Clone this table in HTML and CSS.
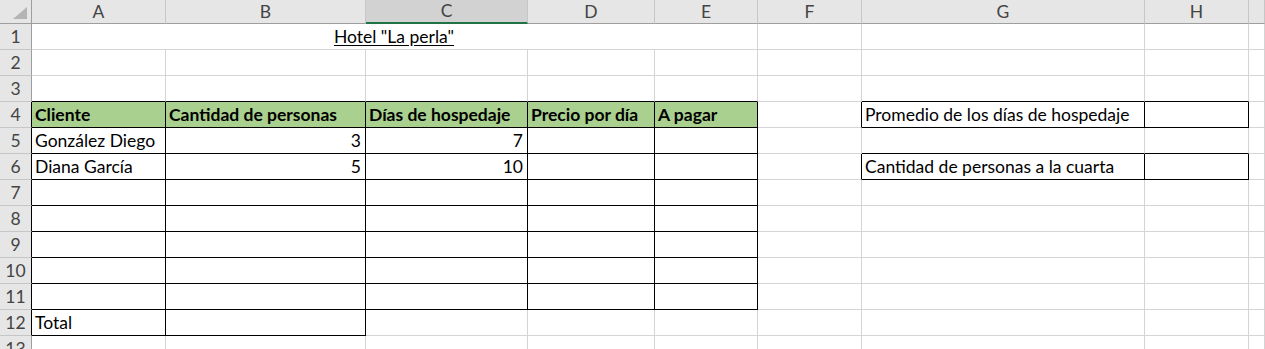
FILE: index.html
```html
<!DOCTYPE html>
<html lang="es">
<head>
<meta charset="utf-8">
<title>Hotel "La perla"</title>
<link rel="stylesheet" href="styles.css">
</head>
<body>
<div class="sheet">
  <!-- column headers -->
  <div class="corner"><span class="tri"></span></div>
  <div class="hd">A</div>
  <div class="hd">B</div>
  <div class="hd sel">C</div>
  <div class="hd">D</div>
  <div class="hd">E</div>
  <div class="hd">F</div>
  <div class="hd">G</div>
  <div class="hd">H</div>
  <div class="hd"></div>

  <!-- row 1 -->
  <div class="rh">1</div>
  <div class="c title">Hotel "La perla"</div>
  <div class="c"></div><div class="c"></div><div class="c"></div><div class="c"></div>

  <!-- row 2 -->
  <div class="rh">2</div>
  <div class="c"></div><div class="c"></div><div class="c"></div><div class="c"></div><div class="c"></div>
  <div class="c"></div><div class="c"></div><div class="c"></div><div class="c"></div>

  <!-- row 3 -->
  <div class="rh">3</div>
  <div class="c bb"></div><div class="c bb"></div><div class="c bb"></div><div class="c bb"></div><div class="c bb"></div>
  <div class="c"></div><div class="c bb"></div><div class="c bb"></div><div class="c"></div>

  <!-- row 4 -->
  <div class="rh br">4</div>
  <div class="c bx head">Cliente</div>
  <div class="c bx head">Cantidad de personas</div>
  <div class="c bx head">Días de hospedaje</div>
  <div class="c bx head">Precio por día</div>
  <div class="c bx head">A pagar</div>
  <div class="c br"></div>
  <div class="c bx">Promedio de los días de hospedaje</div>
  <div class="c bx"></div>
  <div class="c"></div>

  <!-- row 5 -->
  <div class="rh br">5</div>
  <div class="c bx">González Diego</div>
  <div class="c bx num">3</div>
  <div class="c bx num">7</div>
  <div class="c bx"></div>
  <div class="c bx"></div>
  <div class="c"></div>
  <div class="c bb"></div>
  <div class="c bb"></div>
  <div class="c"></div>

  <!-- row 6 -->
  <div class="rh br">6</div>
  <div class="c bx">Diana García</div>
  <div class="c bx num">5</div>
  <div class="c bx num">10</div>
  <div class="c bx"></div>
  <div class="c bx"></div>
  <div class="c br"></div>
  <div class="c bx">Cantidad de personas a la cuarta</div>
  <div class="c bx"></div>
  <div class="c"></div>

  <!-- rows 7-11 -->
  <div class="rh br">7</div>
  <div class="c bx"></div><div class="c bx"></div><div class="c bx"></div><div class="c bx"></div><div class="c bx"></div>
  <div class="c"></div><div class="c"></div><div class="c"></div><div class="c"></div>

  <div class="rh br">8</div>
  <div class="c bx"></div><div class="c bx"></div><div class="c bx"></div><div class="c bx"></div><div class="c bx"></div>
  <div class="c"></div><div class="c"></div><div class="c"></div><div class="c"></div>

  <div class="rh br">9</div>
  <div class="c bx"></div><div class="c bx"></div><div class="c bx"></div><div class="c bx"></div><div class="c bx"></div>
  <div class="c"></div><div class="c"></div><div class="c"></div><div class="c"></div>

  <div class="rh br">10</div>
  <div class="c bx"></div><div class="c bx"></div><div class="c bx"></div><div class="c bx"></div><div class="c bx"></div>
  <div class="c"></div><div class="c"></div><div class="c"></div><div class="c"></div>

  <div class="rh br">11</div>
  <div class="c bx"></div><div class="c bx"></div><div class="c bx"></div><div class="c bx"></div><div class="c bx"></div>
  <div class="c"></div><div class="c"></div><div class="c"></div><div class="c"></div>

  <!-- row 12 -->
  <div class="rh br">12</div>
  <div class="c bx">Total</div>
  <div class="c bx"></div>
  <div class="c"></div><div class="c"></div><div class="c"></div>
  <div class="c"></div><div class="c"></div><div class="c"></div><div class="c"></div>

  <!-- row 13 -->
  <div class="rh">13</div>
  <div class="c"></div><div class="c"></div><div class="c"></div><div class="c"></div><div class="c"></div>
  <div class="c"></div><div class="c"></div><div class="c"></div><div class="c"></div>
</div>
</body>
</html>
```

FILE: styles.css
```css
html, body {
  margin: 0;
  padding: 0;
  background: #fff;
  overflow: hidden;
}

.sheet {
  display: grid;
  grid-template-columns: 32px 134px 200px 162px 127px 103px 104px 283px 104px 1fr;
  grid-template-rows: 24px repeat(13, 26px);
  width: 1265px;
  font-family: Lato, "Open Sans", sans-serif;
  font-size: 17.5px;
  color: #000;
}

.sheet > div {
  box-sizing: border-box;
  border-right: 1px solid #d4d4d4;
  border-bottom: 1px solid #d4d4d4;
  white-space: nowrap;
  overflow: visible;
  line-height: 25px;
}

/* header strip */
.corner {
  position: relative;
  background: #e6e6e6;
  border-right-color: #9e9e9e !important;
  border-bottom-color: #9e9e9e !important;
}
.tri {
  position: absolute;
  right: 4px;
  bottom: 4px;
  width: 0;
  height: 0;
  border-left: 14px solid transparent;
  border-bottom: 12px solid #b4b4b4;
}

.hd {
  background: #e6e6e6;
  color: #444;
  text-align: center;
  line-height: 23px !important;
  border-right-color: #c6c6c6 !important;
  border-bottom-color: #9e9e9e !important;
}
.hd.sel {
  background: #d2d2d2;
  border-bottom: 2px solid #217346 !important;
  line-height: 22px !important;
}

.rh {
  background: #e6e6e6;
  color: #444;
  text-align: center;
  border-right-color: #9e9e9e !important;
  border-bottom-color: #c6c6c6 !important;
}

/* cells */
.c {
  padding: 0 4px 0 3px;
}
.title {
  grid-column: span 5;
  text-align: center;
  text-decoration: underline;
  text-underline-offset: 2px;
}
.num {
  text-align: right;
}
.head {
  background: #a9d08e;
  font-weight: 700;
}

/* black cell borders */
.bx {
  border-right-color: #000 !important;
  border-bottom-color: #000 !important;
}
.bb {
  border-bottom-color: #000 !important;
}
.br {
  border-right-color: #000 !important;
}
```
